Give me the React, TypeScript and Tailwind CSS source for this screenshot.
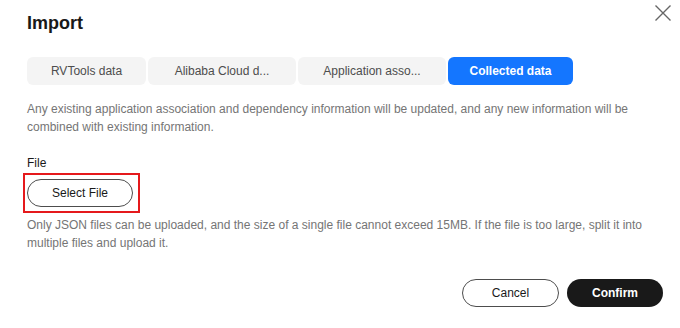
const TABS = ['RVTools data', 'Alibaba Cloud d...', 'Application asso...', 'Collected data'];
const TAB_W = ['w-[119px]', 'w-[148px]', 'w-[148px]', 'w-[125px]'];

export default function App() {
  const active = 3;

  return (
    <div className="relative w-[680px] h-[328px] bg-white font-['Liberation_Sans',Arial,sans-serif] text-[12px]">
      <button className="absolute left-[654px] top-[4px] text-[#666666]" aria-label="Close">
        <svg width="18" height="18" viewBox="0 0 18 18" fill="none" stroke="currentColor" strokeWidth="1.4">
          <path d="M1.5 1.5 L16.5 16.5 M16.5 1.5 L1.5 16.5" />
        </svg>
      </button>

      <div className="px-[27px] pt-[11px]">
        <h1 className="text-[18px] leading-[24px] font-bold text-[#191919]">Import</h1>

        {/* Tabs */}
        <div className="mt-[22px] flex gap-[2px]">
          {TABS.map((tab, i) => (
            <div
              key={tab}
              className={`${TAB_W[i]} h-[28px] rounded-[6px] flex items-center justify-center ${
                i === active ? 'bg-[#1476ff] text-white font-bold' : 'bg-[#f4f4f4] text-[#4d4d4d]'
              }`}
            >
              {tab}
            </div>
          ))}
        </div>

        <p className="mt-[15px] leading-[18px] text-[#757575]">
          Any existing application association and dependency information will be updated, and any new information will be
          combined with existing information.
        </p>

        <div className="mt-[18px] leading-[18px] text-[#191919]">File</div>

        <div className="mt-[1px] ml-[-4px] inline-block border-2 border-[#e5191c] pl-[2px] pr-[5px] py-[4px]">
          <button className="w-[106px] h-[28px] rounded-full border border-[#4d4d4d] text-[#191919] flex items-center justify-center">
            Select File
          </button>
        </div>

        <p className="mt-[3px] leading-[18px] text-[#757575]">
          Only JSON files can be uploaded, and the size of a single file cannot exceed 15MB. If the file is too large, split it into
          multiple files and upload it.
        </p>
      </div>

      {/* Footer */}
      <div className="absolute right-[17px] top-[279px] flex gap-[8px]">
        <button className="w-[97px] h-[28px] rounded-full border border-[#4d4d4d] text-[#191919]">Cancel</button>
        <button className="w-[96px] h-[28px] rounded-full bg-[#191919] text-white font-bold">Confirm</button>
      </div>
    </div>
  );
}
